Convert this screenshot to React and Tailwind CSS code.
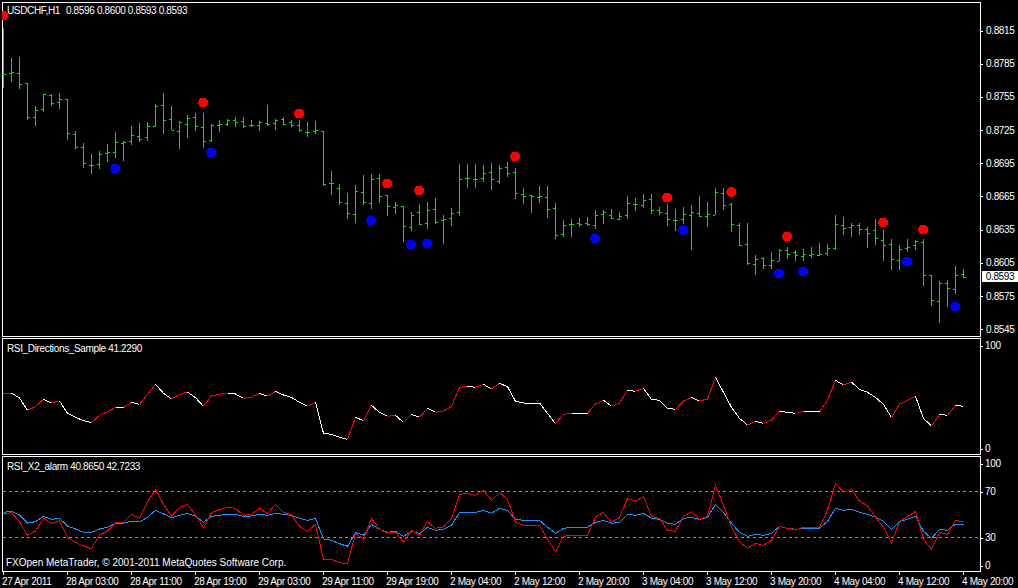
const font = { fontFamily: '"Liberation Sans", Arial, sans-serif' };

// price bars in page pixels: high, low, open, close
const bars = [
  [28,88,74,74],[58,82,73,72],[57,89,73,84],[83,120,83,117],[106,126,117,110],[94,112,109,94],[94,106,95,103],[93,109,102,99],
  [99,140,99,133],[131,149,134,147],[143,168,147,163],[154,174,165,165],[151,169,164,154],[144,162,153,152],[132,158,152,142],[141,161,143,142],
  [126,145,141,135],[123,142,136,139],[122,141,137,126],[104,127,126,106],[93,134,105,120],[106,130,119,130],[121,149,131,122],[115,138,124,118],
  [113,131,117,126],[113,148,127,141],[124,142,140,125],[120,132,125,124],[119,126,124,120],[117,127,120,122],[117,128,121,126],[120,127,125,125],
  [121,131,125,122],[105,126,123,124],[119,130,123,120],[117,125,119,124],[120,127,122,125],[120,132,125,130],[122,137,132,132],[121,134,131,130],
  [131,186,131,184],[171,195,183,183],[184,205,188,202],[193,219,203,213],[185,223,214,191],[175,205,192,202],[174,209,203,179],[174,203,178,196],
  [195,216,195,206],[202,214,207,205],[206,242,206,226],[212,231,227,215],[204,225,212,224],[202,229,223,210],[198,224,209,222],[215,244,220,219],
  [208,226,218,213],[164,216,212,179],[164,188,178,178],[164,188,179,179],[165,182,178,173],[163,190,172,179],[165,184,181,168],[162,177,167,173],
  [168,199,172,193],[188,204,194,196],[195,213,195,196],[186,203,197,196],[186,218,197,209],[203,239,208,235],[220,237,234,225],[219,237,224,224],
  [218,227,223,224],[217,226,223,224],[210,229,225,215],[210,224,214,212],[209,219,215,218],[212,220,219,216],[196,219,215,203],[198,211,204,204],
  [194,208,205,200],[194,214,199,210],[207,215,210,212],[204,226,213,219],[209,231,220,220],[207,224,219,214],[205,250,215,212],[196,217,213,216],
  [202,227,216,214],[188,215,215,192],[188,210,193,205],[203,232,204,224],[223,246,225,245],[223,265,244,263],[255,275,264,259],[257,269,258,265],
  [252,269,265,260],[249,261,261,250],[247,259,250,254],[250,261,252,255],[249,261,256,254],[247,258,255,254],[243,256,255,254],[244,256,253,248],
  [215,250,248,224],[217,235,225,228],[223,237,227,225],[223,235,225,229],[227,248,229,233],[219,245,230,238],[230,261,240,245],[239,270,244,259],
  [245,270,260,249],[239,252,248,247],[240,250,245,241],[239,286,242,275],[275,306,275,300],[281,323,301,283],[280,307,283,288],[266,294,289,275],
  [269,278,274,277],
];

const redDots = [[3,15.5],[203,102.5],[299,113.5],[387,183.5],[419,190.5],[515,156.5],[667,197.5],[731,192],[787,236.5],[883,222.5],[923,229.5]];
const blueDots = [[115,168.5],[211,152.5],[371,220.5],[411,244.5],[427,243.5],[595,238.5],[683,230],[779,273.5],[803,271.5],[907,261.5],[955,306.5]];

// indicator lines, values are 3x zoom offsets
const dirRaw = [192,189,204,241,230,208,219,213,250,262,272,278,256,245,232,232,217,223,193,163,190,207,193,186,203,229,198,193,189,192,205,202,190,199,184,195,202,217,229,217,310,313,322,328,262,272,226,247,259,256,277,253,262,235,247,244,229,172,169,172,163,177,160,170,214,219,219,219,250,281,253,250,250,250,222,211,229,219,181,184,175,208,211,235,238,213,202,213,207,142,187,232,265,285,274,280,270,244,247,250,244,244,244,211,151,165,156,178,187,202,223,262,222,211,199,265,288,253,256,226,229];
const fastRaw = [176,173,200,241,228,190,205,198,247,262,273,281,240,228,204,203,178,190,140,104,148,184,157,148,180,219,173,164,157,160,181,178,160,176,148,172,180,214,229,208,313,313,323,326,235,253,190,223,234,232,262,226,241,199,220,216,190,118,115,121,106,136,112,133,202,211,211,211,253,290,244,241,241,241,186,172,202,187,130,139,125,184,190,226,229,184,170,193,184,91,150,217,260,280,265,271,256,214,220,224,217,217,217,166,85,112,103,139,152,187,217,265,199,185,169,253,283,232,238,196,201];
const slowRaw = [172,169,180,204,200,184,193,190,213,222,232,232,222,217,204,204,199,201,187,166,177,188,181,175,184,202,184,181,178,178,184,183,178,181,175,178,181,190,196,190,252,256,266,274,232,241,208,223,232,229,244,229,235,217,226,223,211,172,172,172,166,175,160,166,193,196,196,196,217,235,220,217,217,217,202,196,205,202,178,181,175,190,193,205,208,190,187,193,187,148,172,205,232,244,238,241,235,214,220,223,220,220,220,199,160,166,163,172,178,187,199,224,199,193,184,229,250,223,226,208,208];

const px = (i) => 3.5 + 8 * i;
const toLine = (raw, top) => raw.map((v, i) => `${px(i)},${top + v / 3}`).join(' ');

const prices = ['0.8815','0.8785','0.8755','0.8725','0.8695','0.8665','0.8635','0.8605','0.8575','0.8545'];
const times = ['27 Apr 2011','28 Apr 03:00','28 Apr 11:00','28 Apr 19:00','29 Apr 03:00','29 Apr 11:00','29 Apr 19:00','2 May 04:00','2 May 12:00','2 May 20:00','3 May 04:00','3 May 12:00','3 May 20:00','4 May 04:00','4 May 12:00','4 May 20:00'];

function AxisLabel({ children, gap = 'gap-[3px]' }) {
  return (
    <div className={`flex h-3 items-center ${gap}`}>
      <div className="h-px w-[2px] bg-white" />
      <span>{children}</span>
    </div>
  );
}

function PriceChart() {
  return (
    <svg className="absolute -inset-px" width="979" height="335" viewBox="2 2 979 335" shapeRendering="crispEdges">
      {bars.map(([h, l, o, c], i) => {
        const x = 3 + 8 * i;
        return (
          <g key={i} fill="#00e600">
            <rect x={x} y={h} width="1" height={l - h} />
            <rect x={x - 2} y={o} width="2" height="1" />
            <rect x={x + 1} y={c} width="2" height="1" />
          </g>
        );
      })}
      {redDots.map(([x, y]) => <circle key={x} cx={x + 0.3} cy={y} r="5" fill="#ff0000" />)}
      {blueDots.map(([x, y]) => <circle key={x} cx={x + 0.3} cy={y} r="5" fill="#0000ff" />)}
    </svg>
  );
}

function DirectionsChart() {
  const segs = dirRaw.slice(1).map((v, i) => {
    const y1 = 330 + dirRaw[i] / 3;
    const y2 = 330 + v / 3;
    return <line key={i} x1={px(i)} y1={y1} x2={px(i + 1)} y2={y2} stroke={v < dirRaw[i] ? '#ff0000' : '#ffffff'} />;
  });
  return (
    <svg className="absolute -inset-px" width="979" height="117" viewBox="2 338 979 117" shapeRendering="crispEdges">
      {segs}
    </svg>
  );
}

function AlarmChart() {
  return (
    <svg className="absolute -inset-px" width="979" height="116" viewBox="2 456 979 116" shapeRendering="crispEdges" fill="none">
      <line x1="3" y1="491.5" x2="980" y2="491.5" stroke="#d9822b" strokeDasharray="3 3" />
      <line x1="3" y1="537.5" x2="980" y2="537.5" stroke="#d9822b" strokeDasharray="3 3" />
      <polyline points={toLine(slowRaw, 455)} stroke="#1e90ff" />
      <polyline points={toLine(fastRaw, 455)} stroke="#ff0000" />
    </svg>
  );
}

export default function App() {
  return (
    <div style={font} className="relative flex h-[588px] w-[1018px] flex-col overflow-hidden bg-black pl-[2px] pt-[2px] text-[10px] leading-3 tracking-[-0.35px] text-white">
      <div className="flex h-[335px]">
        <div className="relative w-[979px] border border-white">
          <PriceChart />
          <div className="absolute left-1 top-[2px] flex gap-[6px] whitespace-pre">
            <span>USDCHF,H1</span>
            <span>0.8596 0.8600 0.8593 0.8593</span>
          </div>
        </div>
        <div className="relative flex-1 pt-[23px]">
          {prices.map((p) => (
            <div key={p} className="h-[33.2px]">
              <AxisLabel>{p}</AxisLabel>
            </div>
          ))}
          <div className="absolute left-px top-[269px] flex h-[11px] w-9 items-center justify-center bg-white text-black">0.8593</div>
        </div>
      </div>

      <div className="mt-px flex h-[117px]">
        <div className="relative w-[979px] border border-white">
          <DirectionsChart />
          <div className="absolute left-1 top-1">RSI_Directions_Sample 41.2290</div>
        </div>
        <div className="flex flex-1 flex-col justify-between pt-[2px]">
          <AxisLabel gap="gap-[2px]">100</AxisLabel>
          <AxisLabel gap="gap-[2px]">0</AxisLabel>
        </div>
      </div>

      <div className="mt-px flex h-[116px]">
        <div className="relative w-[979px] border border-white">
          <AlarmChart />
          <div className="absolute left-1 top-1">RSI_X2_alarm 40.8650 42.7233</div>
          <div className="absolute bottom-[2px] left-[3px] tracking-normal">FXOpen MetaTrader, © 2001-2011 MetaQuotes Software Corp.</div>
        </div>
        <div className="flex flex-1 flex-col pt-[2px]">
          <AxisLabel gap="gap-[2px]">100</AxisLabel>
          <div className="mt-4"><AxisLabel gap="gap-[2px]">70</AxisLabel></div>
          <div className="mt-[34px]"><AxisLabel gap="gap-[2px]">30</AxisLabel></div>
          <div className="mt-4"><AxisLabel gap="gap-[2px]">0</AxisLabel></div>
        </div>
      </div>

      <div className="flex">
        {times.map((t) => (
          <div key={t} className="w-16 shrink-0 whitespace-nowrap">
            <div className="ml-px h-[3px] w-px bg-white" />
            <div className="pt-[1px]">{t}</div>
          </div>
        ))}
      </div>
    </div>
  );
}
